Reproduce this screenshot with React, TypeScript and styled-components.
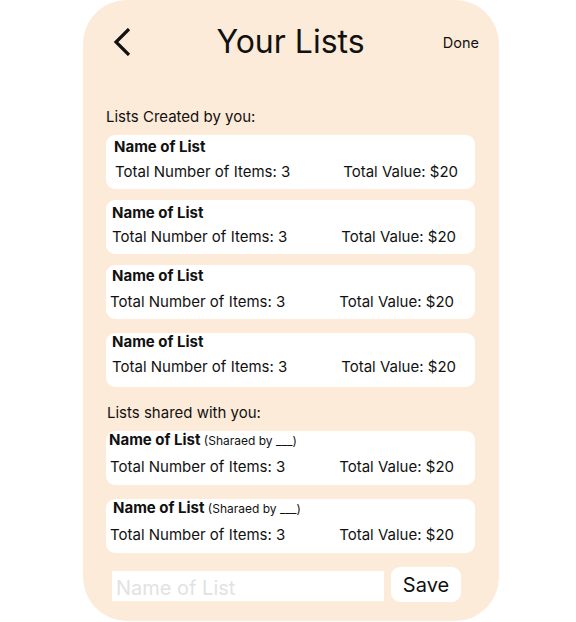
import React from "react";
import styled, { createGlobalStyle } from "styled-components";

const Global = createGlobalStyle`
  html, body { margin: 0; padding: 0; background: #ffffff; }
  body { font-family: Inter, "Noto Sans", sans-serif; color: #111111; }
  * { box-sizing: border-box; }
`;

const Page = styled.div`
  width: 576px;
  height: 622px;
  padding-left: 83px;
  overflow: hidden;
`;

const Phone = styled.div`
  width: 416px;
  height: 621px;
  background: #fdebda;
  border-radius: 44px;
  display: flex;
  flex-direction: column;
  padding: 0 24px 0 23px;
`;

const Header = styled.header`
  display: grid;
  grid-template-columns: 1fr auto 1fr;
  align-items: center;
  height: 46px;
  margin-top: 19px;
  margin-bottom: 43px;
`;

const BackButton = styled.button`
  justify-self: start;
  background: none;
  border: none;
  padding: 0;
  margin-left: 6px;
  width: 20px;
  height: 28px;
  display: flex;
  color: #111111;
  cursor: pointer;
`;

const Title = styled.h1`
  margin: 0;
  font-size: 32px;
  font-weight: 400;
  line-height: 38px;
  color: #111111;
`;

const Done = styled.span`
  justify-self: end;
  font-size: 14.5px;
  line-height: 17px;
  margin-right: -4px;
  margin-top: 1px;
`;

const SectionLabel = styled.div<{ $top: number; $left: number }>`
  font-size: 15px;
  line-height: 18px;
  margin-top: ${(p) => p.$top}px;
  margin-left: ${(p) => p.$left}px;
  margin-bottom: 9px;
`;

const Card = styled.div<{ $top: number; $padTop: number; $padL: number; $padR: number; $gap: number }>`
  background: #ffffff;
  border-radius: 9px;
  height: 54px;
  margin-top: ${(p) => p.$top}px;
  padding: ${(p) => p.$padTop}px ${(p) => p.$padR}px 0 ${(p) => p.$padL}px;
  display: flex;
  flex-direction: column;
  gap: ${(p) => p.$gap}px;
`;

const CardTitle = styled.div<{ $shift: number }>`
  font-size: 15px;
  line-height: 17px;
  font-weight: 700;
  margin-left: ${(p) => p.$shift}px;
  white-space: nowrap;
`;

const SharedBy = styled.span`
  font-size: 12px;
  font-weight: 400;
`;

const CardRow = styled.div`
  display: flex;
  justify-content: space-between;
  font-size: 15px;
  line-height: 18px;
  white-space: nowrap;
`;

const Footer = styled.div`
  display: flex;
  align-items: center;
  gap: 7px;
  margin-top: 14px;
  padding-left: 6px;
`;

const NameInput = styled.input`
  width: 272px;
  height: 30px;
  border: none;
  outline: none;
  background: #ffffff;
  font-family: Inter, "Noto Sans", sans-serif;
  font-size: 20px;
  padding: 3px 4px 0;
  margin-top: 3px;
  color: #111111;
  &::placeholder { color: #e2e2e2; }
`;

const SaveButton = styled.button`
  width: 70px;
  height: 35px;
  border: none;
  border-radius: 9px;
  background: #ffffff;
  font-family: Inter, "Noto Sans", sans-serif;
  font-size: 20px;
  color: #111111;
  padding: 0;
  cursor: pointer;
`;

type ListItem = {
  top: number;
  padTop: number;
  padL: number;
  padR: number;
  gap: number;
  shift: number;
  shared?: boolean;
};

const created: ListItem[] = [
  { top: 0, padTop: 3, padL: 9, padR: 17, gap: 8, shift: -1 },
  { top: 11, padTop: 4, padL: 6, padR: 19, gap: 7, shift: 0 },
  { top: 11, padTop: 2, padL: 4, padR: 21, gap: 9, shift: 2 },
  { top: 14, padTop: 0, padL: 6, padR: 19, gap: 8, shift: 0 },
];

const shared: ListItem[] = [
  { top: 0, padTop: 0, padL: 4, padR: 21, gap: 9, shift: -1, shared: true },
  { top: 14, padTop: 0, padL: 4, padR: 21, gap: 9, shift: 3, shared: true },
];

const ListCard = ({ item }: { item: ListItem }) => (
  <Card $top={item.top} $padTop={item.padTop} $padL={item.padL} $padR={item.padR} $gap={item.gap}>
    <CardTitle $shift={item.shift}>
      Name of List{item.shared && <SharedBy> (Sharaed by ___)</SharedBy>}
    </CardTitle>
    <CardRow>
      <span>Total Number of Items: 3</span>
      <span>Total Value: $20</span>
    </CardRow>
  </Card>
);

export default function App() {
  return (
    <>
      <Global />
      <Page>
        <Phone>
          <Header>
            <BackButton aria-label="Back">
              <svg width="20" height="28" viewBox="0 0 20 28" fill="none">
                <polyline points="17,1 4,14 17,27" stroke="currentColor" strokeWidth="3.2" strokeLinejoin="miter" />
              </svg>
            </BackButton>
            <Title>Your Lists</Title>
            <Done>Done</Done>
          </Header>
          <SectionLabel $top={0} $left={0}>Lists Created by you:</SectionLabel>
          {created.map((c, i) => (
            <ListCard key={i} item={c} />
          ))}
          <SectionLabel $top={17} $left={1}>Lists shared with you:</SectionLabel>
          {shared.map((c, i) => (
            <ListCard key={i} item={c} />
          ))}
          <Footer>
            <NameInput placeholder="Name of List" />
            <SaveButton>Save</SaveButton>
          </Footer>
        </Phone>
      </Page>
    </>
  );
}
